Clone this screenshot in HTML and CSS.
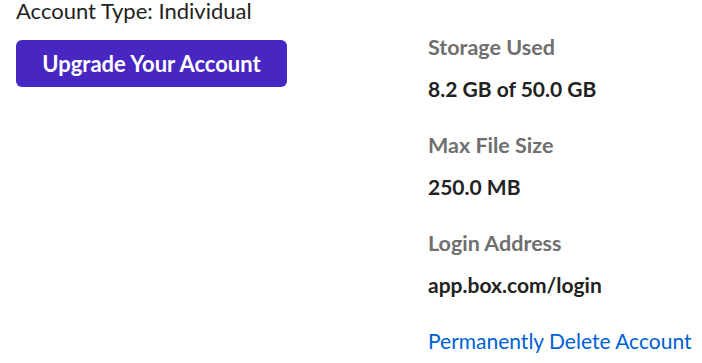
FILE: index.html
```html
<!DOCTYPE html>
<html lang="en">
<head>
  <meta charset="UTF-8">
  <title>Account Settings</title>
  <link rel="stylesheet" href="styles.css">
</head>
<body>
  <div class="account-panel">
    <!-- Left: plan info -->
    <div class="plan-col">
      <p class="account-type">Account Type: Individual</p>
      <button class="upgrade-btn">Upgrade Your Account</button>
    </div>

    <!-- Right: usage details -->
    <div class="details-col">
      <dl class="details">
        <dt>Storage Used</dt>
        <dd>8.2 GB of 50.0 GB</dd>
        <dt>Max File Size</dt>
        <dd>250.0 MB</dd>
        <dt>Login Address</dt>
        <dd>app.box.com/login</dd>
      </dl>
      <a href="#" class="delete-link">Permanently Delete Account</a>
    </div>
  </div>
</body>
</html>
```

FILE: styles.css
```css
*, *::before, *::after {
  margin: 0;
  padding: 0;
  box-sizing: border-box;
}
body {
  font-family: 'Lato', 'Liberation Sans', sans-serif;
  background: #fff;
  color: #222;
}
.account-panel {
  display: flex;
}
/* Left column */
.plan-col {
  width: 428px;
  padding-left: 16px;
}
.account-type {
  font-size: 22px;
  line-height: 22px;
  color: #222;
}
.upgrade-btn {
  margin-top: 18px;
  width: 271px;
  height: 47px;
  border: none;
  border-radius: 6px;
  background-color: #4826c2;
  color: #fff;
  font-family: inherit;
  font-size: 22px;
  font-weight: 700;
  cursor: pointer;
}
/* Right column */
.details-col {
  padding-top: 35px;
}
.details dt {
  font-size: 21.5px;
  line-height: 24px;
  font-weight: 700;
  color: #6f6f6f;
}
.details dd {
  margin-top: 18px;
  margin-bottom: 32px;
  font-size: 21px;
  line-height: 24px;
  font-weight: 700;
  color: #222;
}
.delete-link {
  display: block;
  font-size: 21px;
  line-height: 24px;
  color: #0061d5;
  text-decoration: none;
}
```
